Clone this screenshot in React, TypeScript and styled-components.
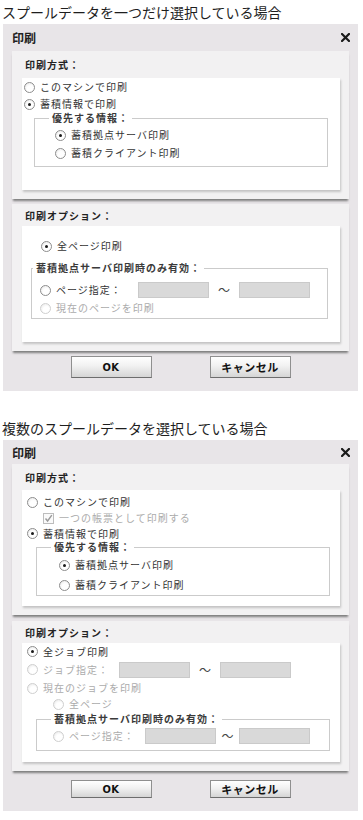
import React from "react";
import styled, { createGlobalStyle } from "styled-components";

const GlobalStyle = createGlobalStyle`
  body {
    margin: 0;
    background: #ffffff;
    font-family: "Noto Sans CJK JP", "Noto Sans", sans-serif;
    color: #333;
  }
`;

const Page = styled.div`
  width: 363px;
  padding-top: 2px;
`;

const Caption = styled.div<{ $mt: number }>`
  margin-top: ${(p) => p.$mt}px;
  padding-left: 2px;
  font-size: 14px;
  line-height: 20px;
  color: #1e1e1e;
`;

const Dialog = styled.div`
  margin: 2px 0 0 3px;
  width: 355px;
  background: #e8e5e8;
  padding-bottom: 13px;
`;

const TitleBar = styled.div<{ $h: number }>`
  height: ${(p) => p.$h}px;
  display: flex;
  align-items: center;
  justify-content: space-between;
  padding: 0 8px 0 9px;
  font-size: 12px;
  font-weight: 700;
  color: #222;
`;

const Panel = styled.div<{ $mt?: number }>`
  margin: ${(p) => p.$mt ?? 0}px 9px 0 9px;
  background: #f2f1f2;
  padding-bottom: 9px;
  box-shadow: 0 3px 2px -1px #7e7e7e;
`;

const PanelHead = styled.div<{ $h: number }>`
  height: ${(p) => p.$h}px;
  display: flex;
  align-items: center;
  padding-left: 13px;
  font-size: 10px;
  font-weight: 700;
  letter-spacing: 1px;
  color: #222;
`;

const Inner = styled.div<{ $pt?: number; $pb: number }>`
  margin: 0 9px 0 10px;
  background: #ffffff;
  padding: ${(p) => p.$pt ?? 0}px 0 ${(p) => p.$pb}px 0;
  box-shadow: 1px 2px 2px #c4c4c4;
`;

const Row = styled.div<{ $h: number; $pl: number }>`
  height: ${(p) => p.$h}px;
  display: flex;
  align-items: center;
  padding-left: ${(p) => p.$pl}px;
`;

const Radio = styled.span<{ $on?: boolean; $off?: boolean }>`
  position: relative;
  flex: none;
  width: 11px;
  height: 11px;
  box-sizing: border-box;
  border-radius: 50%;
  border: 1px solid ${(p) => (p.$off ? "#cfcfcf" : "#8d8d8d")};
  background: radial-gradient(circle at 60% 65%, #ffffff 40%, #e4e4e4 100%);
  &::after {
    content: "";
    display: ${(p) => (p.$on ? "block" : "none")};
    position: absolute;
    left: 3px;
    top: 3px;
    width: 3px;
    height: 3px;
    border-radius: 50%;
    background: #1a1a1a;
  }
`;

const Check = styled.span`
  flex: none;
  width: 11px;
  height: 11px;
  box-sizing: border-box;
  border: 1px solid #bdbdbd;
  background: #fafafa;
  display: flex;
  align-items: center;
  justify-content: center;
`;

const Label = styled.span<{ $off?: boolean; $w?: number }>`
  margin-left: 5px;
  ${(p) => (p.$w ? `width: ${p.$w}px; flex: none;` : "")}
  font-size: 10px;
  line-height: 12px;
  letter-spacing: 1px;
  white-space: nowrap;
  color: ${(p) => (p.$off ? "#ababab" : "#333")};
`;

const Field = styled.span`
  flex: none;
  width: 71px;
  height: 16px;
  box-sizing: border-box;
  background: #d9d9d9;
  border: 1px solid #cacaca;
`;

const Tilde = styled.span<{ $w: number }>`
  flex: none;
  width: ${(p) => p.$w}px;
  text-align: center;
  font-size: 12px;
  line-height: 12px;
  color: #444;
`;

const Group = styled.fieldset<{ $ml: number; $mr: number; $mt: number; $pt: number; $pb: number }>`
  margin: ${(p) => p.$mt}px ${(p) => p.$mr}px 0 ${(p) => p.$ml}px;
  padding: ${(p) => p.$pt}px 0 ${(p) => p.$pb}px 0;
  border: 1px solid #cbcbcb;
  min-width: 0;
`;

const Legend = styled.legend<{ $ml: number }>`
  margin-left: ${(p) => p.$ml}px;
  padding: 0 3px;
  font-size: 10px;
  line-height: 12px;
  font-weight: 700;
  letter-spacing: 1px;
  color: #3a3a3a;
`;

const Buttons = styled.div<{ $mt: number }>`
  margin-top: ${(p) => p.$mt}px;
  display: flex;
  justify-content: center;
  gap: 58px;
`;

const Button = styled.button<{ $h: number }>`
  width: 81px;
  height: ${(p) => p.$h}px;
  padding: 0;
  border: 1px solid #8f8f8f;
  border-bottom-color: #6d6d6d;
  background: linear-gradient(#ffffff, #f1f1f1 45%, #d5d5d5);
  font-family: "DejaVu Sans Condensed", "DejaVu Sans", "Noto Sans CJK JP", sans-serif;
  font-size: 11px;
  font-weight: 700;
  color: #111;
  letter-spacing: 0.5px;
`;

const Close = () => (
  <svg width="9" height="9" viewBox="0 0 9 9">
    <path d="M1 1 L8 8 M8 1 L1 8" stroke="#1a1a1a" strokeWidth="2.2" strokeLinecap="square" />
  </svg>
);

const Tick = () => (
  <svg width="9" height="9" viewBox="0 0 9 9">
    <path d="M1.5 4.5 L3.6 7 L7.8 1.2" fill="none" stroke="#9a9a9a" strokeWidth="1.4" />
  </svg>
);

const App: React.FC = () => (
  <Page>
    <GlobalStyle />
    <Caption $mt={0}>スプールデータを一つだけ選択している場合</Caption>
    <Dialog>
      <TitleBar $h={27}>
        <span>印刷</span>
        <Close />
      </TitleBar>
      <Panel>
        <PanelHead $h={27}>印刷方式：</PanelHead>
        <Inner $pb={23}>
          <Row $h={18} $pl={2}>
            <Radio />
            <Label>このマシンで印刷</Label>
          </Row>
          <Row $h={16} $pl={2}>
            <Radio $on />
            <Label>蓄積情報で印刷</Label>
          </Row>
          <Group $ml={12} $mr={12} $mt={0} $pt={2} $pb={4}>
            <Legend $ml={14}>優先する情報：</Legend>
            <Row $h={18} $pl={20}>
              <Radio $on />
              <Label>蓄積拠点サーバ印刷</Label>
            </Row>
            <Row $h={18} $pl={20}>
              <Radio />
              <Label>蓄積クライアント印刷</Label>
            </Row>
          </Group>
        </Inner>
      </Panel>
      <Panel $mt={5}>
        <PanelHead $h={22}>印刷オプション：</PanelHead>
        <Inner $pt={11} $pb={23}>
          <Row $h={18} $pl={19}>
            <Radio $on />
            <Label>全ページ印刷</Label>
          </Row>
          <Group $ml={9} $mr={12} $mt={7} $pt={6} $pb={2}>
            <Legend $ml={1}>蓄積拠点サーバ印刷時のみ有効：</Legend>
            <Row $h={20} $pl={8}>
              <Radio />
              <Label $w={82}>ページ指定：</Label>
              <Field />
              <Tilde $w={30}>〜</Tilde>
              <Field />
            </Row>
            <Row $h={16} $pl={8}>
              <Radio $off />
              <Label $off>現在のページを印刷</Label>
            </Row>
          </Group>
        </Inner>
      </Panel>
      <Buttons $mt={5}>
        <Button $h={22}>OK</Button>
        <Button $h={22}>キャンセル</Button>
      </Buttons>
    </Dialog>

    <Caption $mt={27}>複数のスプールデータを選択している場合</Caption>
    <Dialog>
      <TitleBar $h={24}>
        <span>印刷</span>
        <Close />
      </TitleBar>
      <Panel>
        <PanelHead $h={26}>印刷方式：</PanelHead>
        <Inner $pt={4} $pb={10}>
          <Row $h={16} $pl={5}>
            <Radio />
            <Label>このマシンで印刷</Label>
          </Row>
          <Row $h={16} $pl={21}>
            <Check>
              <Tick />
            </Check>
            <Label $off>一つの帳票として印刷する</Label>
          </Row>
          <Row $h={15} $pl={5}>
            <Radio $on />
            <Label>蓄積情報で印刷</Label>
          </Row>
          <Group $ml={14} $mr={10} $mt={0} $pt={2} $pb={0}>
            <Legend $ml={14}>優先する情報：</Legend>
            <Row $h={20} $pl={22}>
              <Radio $on />
              <Label>蓄積拠点サーバ印刷</Label>
            </Row>
            <Row $h={20} $pl={22}>
              <Radio />
              <Label>蓄積クライアント印刷</Label>
            </Row>
          </Group>
        </Inner>
      </Panel>
      <Panel $mt={6}>
        <PanelHead $h={22}>印刷オプション：</PanelHead>
        <Inner $pb={11}>
          <Row $h={17} $pl={5}>
            <Radio $on />
            <Label>全ジョブ印刷</Label>
          </Row>
          <Row $h={19} $pl={5}>
            <Radio $off />
            <Label $off $w={76}>ジョブ指定：</Label>
            <Field />
            <Tilde $w={30}>〜</Tilde>
            <Field />
          </Row>
          <Row $h={18} $pl={5}>
            <Radio $off />
            <Label $off>現在のジョブを印刷</Label>
          </Row>
          <Row $h={14} $pl={31}>
            <Radio $off />
            <Label $off>全ページ</Label>
          </Row>
          <Group $ml={14} $mr={10} $mt={2} $pt={1} $pb={4}>
            <Legend $ml={14}>蓄積拠点サーバ印刷時のみ有効：</Legend>
            <Row $h={20} $pl={16}>
              <Radio $off />
              <Label $off $w={76}>ページ指定：</Label>
              <Field />
              <Tilde $w={23}>〜</Tilde>
              <Field />
            </Row>
          </Group>
        </Inner>
      </Panel>
      <Buttons $mt={9}>
        <Button $h={18}>OK</Button>
        <Button $h={18}>キャンセル</Button>
      </Buttons>
    </Dialog>
  </Page>
);

export default App;
